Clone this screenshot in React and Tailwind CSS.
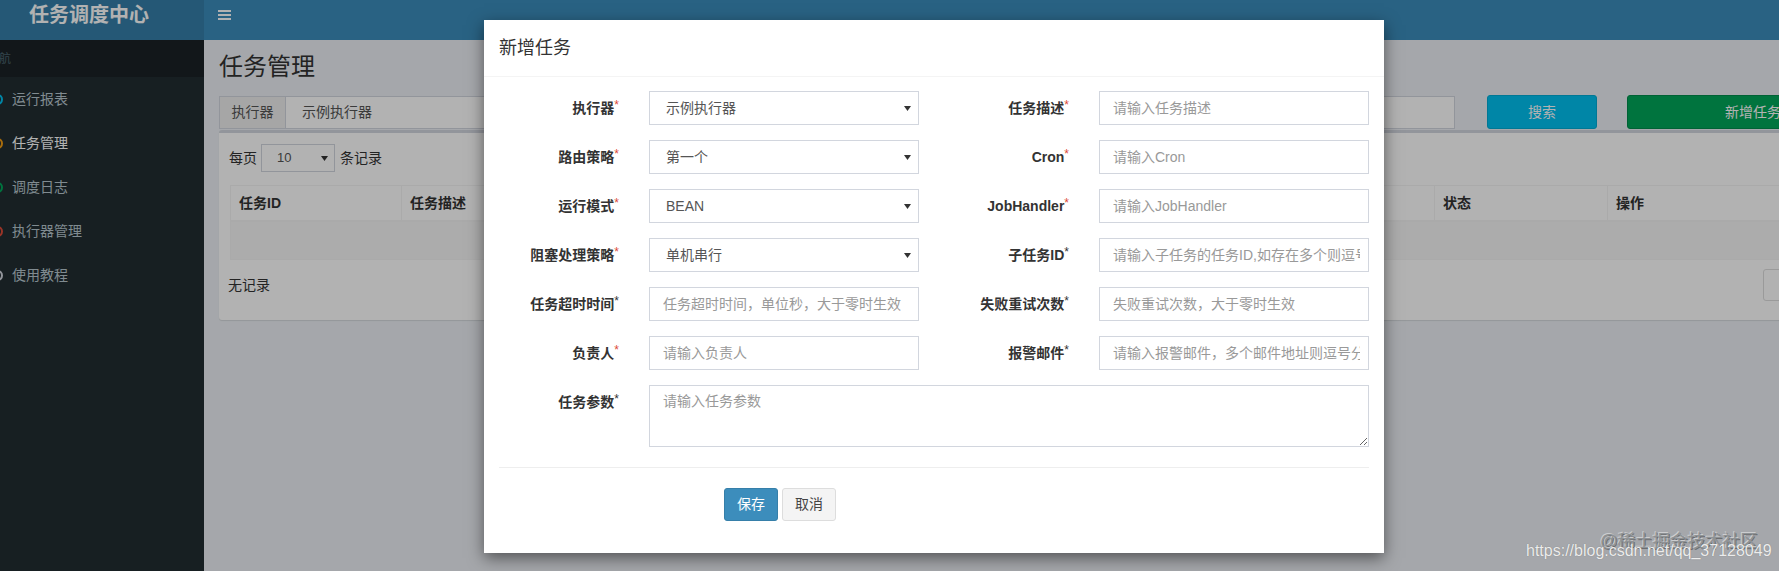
import React from 'react'

const font = "font-['Liberation_Sans','Noto_Sans_CJK_SC',sans-serif]"

const menu = [
  { name: '运行报表', ring: 'border-[#00c0ef]' },
  { name: '任务管理', ring: 'border-[#f39c12]', active: true },
  { name: '调度日志', ring: 'border-[#00a65a]' },
  { name: '执行器管理', ring: 'border-[#dd4b39]' },
  { name: '使用教程', ring: 'border-[#d2d6de]' },
]

const rows = [
  [
    { label: '执行器', red: true, select: '示例执行器' },
    { label: '任务描述', red: true, ph: '请输入任务描述' },
  ],
  [
    { label: '路由策略', red: true, select: '第一个' },
    { label: 'Cron', red: true, ph: '请输入Cron' },
  ],
  [
    { label: '运行模式', red: true, select: 'BEAN' },
    { label: 'JobHandler', red: true, ph: '请输入JobHandler' },
  ],
  [
    { label: '阻塞处理策略', red: true, select: '单机串行' },
    { label: '子任务ID', ph: '请输入子任务的任务ID,如存在多个则逗号分隔' },
  ],
  [
    { label: '任务超时时间', ph: '任务超时时间，单位秒，大于零时生效' },
    { label: '失败重试次数', ph: '失败重试次数，大于零时生效' },
  ],
  [
    { label: '负责人', red: true, ph: '请输入负责人' },
    { label: '报警邮件', ph: '请输入报警邮件，多个邮件地址则逗号分隔' },
  ],
]

// column widths chosen so the visible dividers land where the reference has them
const columns = [
  ['任务ID', 171],
  ['任务描述', 173],
  ['运行模式', 215],
  ['Cron', 215],
  ['负责人', 215],
  ['注册节点', 215],
  ['状态', 173],
  ['操作', 260],
]

function Caret() {
  return (
    <svg width="7" height="5" viewBox="0 0 7 5" className="shrink-0">
      <path d="M0 0h7L3.5 5z" fill="#333" />
    </svg>
  )
}

function Label({ text, red }) {
  return (
    <div className="flex h-[34px] w-[150px] items-center justify-end pr-[15px] text-[14px] font-bold text-[#333]">
      {text}
      <span className={`relative -top-[3px] text-[12px] font-normal ${red ? 'text-[#dd4b39]' : 'text-[#333]'}`}>*</span>
    </div>
  )
}

function Field({ f }) {
  return (
    <>
      <Label text={f.label} red={f.red} />
      <div className="w-[300px] px-[15px]">
        {f.select ? (
          <div className="flex h-[34px] items-center justify-between border border-[#d2d6de] pl-[16px] pr-[7px] text-[14px] text-[#555]">
            <span>{f.select}</span>
            <Caret />
          </div>
        ) : (
          <input
            readOnly
            placeholder={f.ph}
            className="block h-[34px] w-full border border-[#d2d6de] bg-white pl-[13px] pr-[8px] text-[14px] text-[#555] outline-none placeholder:text-[#999]"
          />
        )}
      </div>
    </>
  )
}

function Page() {
  return (
    <div className="flex h-full flex-col">
      <div className="flex h-[40px] shrink-0">
        <div className="flex w-[204px] items-start bg-[#367fa9] pl-[29px] pt-[3px] text-[20px] font-bold leading-[24px] text-white">
          任务调度中心
        </div>
        <div className="flex flex-1 items-start bg-[#3c8dbc] pl-[14px] pt-[10px]">
          <div className="flex flex-col gap-[2px]">
            <div className="h-[2px] w-[13px] bg-white" />
            <div className="h-[2px] w-[13px] bg-white" />
            <div className="h-[2px] w-[13px] bg-white" />
          </div>
        </div>
      </div>
      <div className="flex flex-1">
        <div className="w-[204px] overflow-hidden bg-[#222d32]">
          <div className="-ml-[28px] w-[232px]">
            <div className="flex h-[37px] items-center bg-[#1a2226] pl-[15px] text-[12px] text-[#4b646f]">导航</div>
            {menu.map((m) => (
              <div key={m.name} className="flex h-[44px] items-center pl-[15px] text-[14px]">
                <span className="flex w-[20px] justify-center">
                  <span className={`h-[11px] w-[11px] rounded-full border-2 ${m.ring}`} />
                </span>
                <span className={`ml-[5px] ${m.active ? 'text-white' : 'text-[#b8c7ce]'}`}>{m.name}</span>
              </div>
            ))}
          </div>
        </div>
        <div className="flex-1 overflow-hidden bg-[#ecf0f5] pl-[15px]">
          <h1 className="mt-[15px] text-[24px] leading-[24px] text-[#333]">任务管理</h1>
          <div className="mt-[17px] flex h-[34px] items-start">
            <div className="flex h-[33px] w-[336px] shrink-0 text-[14px]">
              <div className="flex w-[67px] items-center justify-center border border-[#d2d6de] bg-[#eee] text-[#555]">执行器</div>
              <div className="flex flex-1 items-center border border-l-0 border-[#d2d6de] bg-white pl-[16px] text-[#555]">示例执行器</div>
            </div>
            <div className="ml-[30px] h-[33px] w-[400px] shrink-0 border border-[#d2d6de] bg-white" />
            <div className="ml-[30px] h-[33px] w-[440px] shrink-0 border border-[#d2d6de] bg-white" />
            <div className="ml-[32px] -mt-[1px] flex h-[34px] w-[110px] shrink-0 items-center justify-center rounded-[3px] border border-[#00acd6] bg-[#00c0ef] text-[14px] text-white">
              搜索
            </div>
            <div className="ml-[30px] -mt-[1px] flex h-[34px] w-[252px] shrink-0 items-center justify-center rounded-[3px] border border-[#008d4c] bg-[#00a65a] text-[14px] text-white">
              新增任务
            </div>
          </div>
          <div className="h-[190px] w-[1600px] rounded-[3px] border-t-[3px] border-[#d2d6de] bg-white shadow-[0_1px_1px_rgba(0,0,0,0.1)]">
            <div className="p-[10px] text-[14px] text-[#333]">
              <div className="flex h-[30px] items-center">
                <span>每页</span>
                <div className="ml-[4px] flex h-[28px] w-[74px] items-center justify-between border border-[#d2d6de] pl-[15px] pr-[6px] text-[13px] text-[#555]">
                  <span>10</span>
                  <Caret />
                </div>
                <span className="ml-[5px]">条记录</span>
              </div>
              <div className="ml-[1px] mt-[12px] border-l border-[#f4f4f4]">
                <div className="flex h-[37px] border-y border-b-2 border-[#f4f4f4]">
                  {columns.map(([c, w]) => (
                    <div key={c} style={{ width: w }} className="flex shrink-0 items-center border-r border-[#f4f4f4] pl-[8px] font-bold">
                      {c}
                    </div>
                  ))}
                </div>
                <div className="h-[38px] border-b border-[#f4f4f4] bg-[#f6f6f6]" />
              </div>
              <div className="mt-[9px] flex h-[32px] items-center justify-between">
                <span className="-ml-[1px]">无记录</span>
                <div className="h-[32px] w-[46px] rounded-l-[3px] border border-[#ddd] bg-white" />
              </div>
            </div>
          </div>
        </div>
      </div>
    </div>
  )
}

function Modal() {
  return (
    <div className="absolute left-[484px] top-[20px] h-[533px] w-[900px] bg-white shadow-[0_5px_15px_rgba(0,0,0,0.5)]">
      <div className="flex h-[57px] items-center border-b border-[#f4f4f4] px-[15px] text-[18px] text-[#333]">新增任务</div>
      <div className="pt-[14px]">
        {rows.map((r, i) => (
          <div key={i} className="mb-[15px] flex">
            <Field f={r[0]} />
            <Field f={r[1]} />
          </div>
        ))}
        <div className="flex">
          <div className="flex h-[34px] w-[150px] items-center justify-end pr-[15px] text-[14px] font-bold text-[#333]">
            任务参数
            <span className="relative -top-[3px] text-[12px] font-normal">*</span>
          </div>
          <div className="w-[750px] px-[15px]">
            <textarea
              readOnly
              placeholder="请输入任务参数"
              className="block h-[62px] w-full border border-[#d2d6de] px-[13px] py-[5px] text-[14px] outline-none placeholder:text-[#999]"
            />
          </div>
        </div>
        <div className="mx-[15px] mt-[20px] h-px bg-[#eee]" />
        <div className="ml-[240px] mt-[20px] flex gap-[4px] text-[14px]">
          <div className="flex h-[33px] w-[54px] items-center justify-center rounded-[3px] border border-[#367fa9] bg-[#3c8dbc] text-white">保存</div>
          <div className="flex h-[33px] w-[54px] items-center justify-center rounded-[3px] border border-[#ddd] bg-[#f4f4f4] text-[#444]">取消</div>
        </div>
      </div>
    </div>
  )
}

export default function App() {
  return (
    <div className={`relative h-[571px] w-[1779px] overflow-hidden ${font}`}>
      <Page />
      <div className="absolute inset-0 bg-black/30" />
      <Modal />
      <div className="absolute left-[1600px] top-[530px] text-[17.5px] leading-[22px] text-[#8e9295] [text-shadow:-1px_-1px_0_rgba(255,255,255,0.45),1px_1px_0_rgba(0,0,0,0.35)]">
        @稀土掘金技术社区
      </div>
      <div className="absolute left-[1526px] top-[541px] text-[16px] leading-[20px] text-[#ececec] [text-shadow:0_0_1px_rgba(0,0,0,0.3)]">
        https://blog.csdn.net/qq_37128049
      </div>
    </div>
  )
}
